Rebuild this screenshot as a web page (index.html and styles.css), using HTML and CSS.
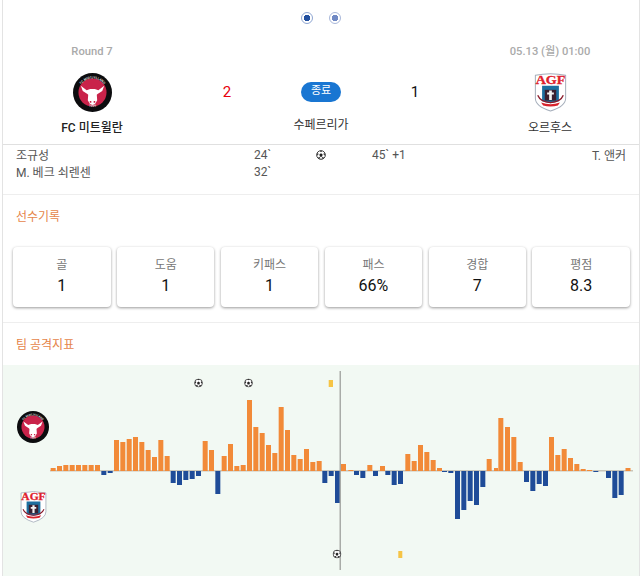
FILE: index.html
```html
<!DOCTYPE html>
<html lang="ko">
<head>
<meta charset="utf-8">
<title>FC 미트윌란 - 오르후스</title>
<link rel="stylesheet" href="styles.css">
</head>
<body>
<svg class="defs" width="0" height="0" aria-hidden="true">
  <defs>
    <path id="arc-top" d="M14 50a36 36 0 0 1 72 0"/>
    <path id="arc-bottom" d="M13 58a38 38 0 0 0 74 0"/>
    <symbol id="fcm" viewBox="0 0 100 100">
      <circle cx="50" cy="50" r="50" fill="#0c0c0e"/>
      <circle cx="50" cy="50" r="36" fill="#c9234a"/>
      <text class="ring-text"><textPath href="#arc-top" startOffset="50%" text-anchor="middle">FC MIDTJYLLAND</textPath></text>
      <text class="ring-text"><textPath href="#arc-bottom" startOffset="50%" text-anchor="middle">1999</textPath></text>
      <path fill="#fff" d="M20 33l15 11 9-3h12l9 3 15-11-5 13-12 8-2 2 1 14-5 9-7 3-7-3-5-9 1-14-2-2-12-8z"/>
      <path fill="#c9234a" d="M43 72h4v4h-4zM53 72h4v4h-4z"/>
    </symbol>
    <symbol id="agf" viewBox="0 0 100 116">
      <path fill="#fff" stroke="#a4adba" stroke-width="3" d="M5 7q45-10 90 0v68q0 24-45 38-45-14-45-38z"/>
      <text class="agf-text" x="50" y="34" text-anchor="middle" textLength="88" lengthAdjust="spacingAndGlyphs">AGF</text>
      <path fill="#1d6f9f" d="M25 38h50v46l-25 6-25-6z"/>
      <path fill="#3a2030" d="M33 50h34v32h-34z"/>
      <path fill="#f2f2f2" d="M46 52h8v6h6v6h-6v16h-8v-16h-6v-6h6z"/>
      <path fill="none" stroke="#8c1c2c" stroke-width="4" d="M12 66q8 20 38 22 30-2 38-22"/>
      <path fill="#d8222c" d="M22 88q28 10 56 0l-6 9q-22 6-44 0z"/>
    </symbol>
    <symbol id="ball" viewBox="0 0 24 24">
      <circle cx="12" cy="12" r="10.5" fill="#fff" stroke="#222" stroke-width="2"/>
      <path fill="#222" d="M12 8l4 3-1.500 5h-5L8 11zM9 2.500l3 2 3-2-3-1zM2.500 9l1 5 2.500-4-1-3zM21.500 9l-1 5-2.500-4 1-3zM7 21l4-1-3-3-3 1zM17 21l-4-1 3-3 3 1z"/>
    </symbol>
  </defs>
</svg>

<main class="page">
  <div class="pager">
    <span class="dot"></span>
    <span class="dot dot-muted"></span>
  </div>

  <section class="match">
    <div class="team">
      <div class="meta">Round 7</div>
      <svg class="crest"><use href="#fcm"/></svg>
      <div class="team-name team-name-bold">FC 미트윌란</div>
    </div>
    <div class="score score-win">2</div>
    <div class="status">
      <span class="pill">종료</span>
      <div class="league">수페르리가</div>
    </div>
    <div class="score">1</div>
    <div class="team">
      <div class="meta">05.13 (월) 01:00</div>
      <svg class="crest"><use href="#agf"/></svg>
      <div class="team-name">오르후스</div>
    </div>
  </section>

  <section class="goals">
    <span>조규성</span>
    <span>24`</span>
    <svg class="goal-ball"><use href="#ball"/></svg>
    <span class="away-minute">45` +1</span>
    <span class="away-scorer">T. 앤커</span>
    <span class="home-second">M. 베크 쇠렌센</span>
    <span>32`</span>
  </section>

  <section class="block">
    <h2 class="block-title">선수기록</h2>
    <div class="cards">
      <div class="card"><div class="card-label">골</div><div class="card-value">1</div></div>
      <div class="card"><div class="card-label">도움</div><div class="card-value">1</div></div>
      <div class="card"><div class="card-label">키패스</div><div class="card-value">1</div></div>
      <div class="card"><div class="card-label">패스</div><div class="card-value">66%</div></div>
      <div class="card"><div class="card-label">경합</div><div class="card-value">7</div></div>
      <div class="card"><div class="card-label">평점</div><div class="card-value">8.3</div></div>
    </div>
  </section>

  <section class="block-chart">
    <h2 class="block-title">팀 공격지표</h2>
    <svg class="chart" viewBox="3 365 636 211" width="636" height="211">
      <use href="#fcm" x="17" y="411" width="32" height="32"/>
      <use href="#agf" x="19.500" y="491" width="28" height="32"/>
      <rect class="axis" x="50" y="470" width="583" height="1.500"/>
      <g class="up">
        <rect x="50.67" y="468" width="5" height="3"/>
        <rect x="57" y="466" width="5" height="5"/>
        <rect x="63.33" y="465" width="5" height="6"/>
        <rect x="69.67" y="465" width="5" height="6"/>
        <rect x="76" y="465" width="5" height="6"/>
        <rect x="82.33" y="465" width="5" height="6"/>
        <rect x="88.67" y="465" width="5" height="6"/>
        <rect x="95" y="465" width="5" height="6"/>
        <rect x="114" y="440" width="5" height="31"/>
        <rect x="120.33" y="442" width="5" height="29"/>
        <rect x="126.67" y="439" width="5" height="32"/>
        <rect x="133" y="437" width="5" height="34"/>
        <rect x="139.33" y="442" width="5" height="29"/>
        <rect x="145.67" y="450" width="5" height="21"/>
        <rect x="152" y="457" width="5" height="14"/>
        <rect x="158.33" y="440" width="5" height="31"/>
        <rect x="164.67" y="456" width="5" height="15"/>
        <rect x="202.67" y="441" width="5" height="30"/>
        <rect x="209" y="450" width="5" height="21"/>
        <rect x="221.67" y="456" width="5" height="15"/>
        <rect x="228" y="444" width="5" height="27"/>
        <rect x="234.33" y="466" width="5" height="5"/>
        <rect x="240.67" y="465" width="5" height="6"/>
        <rect x="247" y="400" width="5" height="71"/>
        <rect x="253.33" y="427" width="5" height="44"/>
        <rect x="259.67" y="433" width="5" height="38"/>
        <rect x="266" y="445" width="5" height="26"/>
        <rect x="272.33" y="453" width="5" height="18"/>
        <rect x="278.67" y="407" width="5" height="64"/>
        <rect x="285" y="430" width="5" height="41"/>
        <rect x="291.33" y="455" width="5" height="16"/>
        <rect x="297.67" y="459" width="5" height="12"/>
        <rect x="304" y="449" width="5" height="22"/>
        <rect x="310.33" y="462" width="5" height="9"/>
        <rect x="316.67" y="461" width="5" height="10"/>
        <rect x="341" y="464" width="5" height="7"/>
        <rect x="348.33" y="470" width="5" height="1"/>
        <rect x="367.33" y="465" width="5" height="6"/>
        <rect x="380" y="466" width="5" height="5"/>
        <rect x="405.33" y="454" width="5" height="17"/>
        <rect x="411.67" y="461" width="5" height="10"/>
        <rect x="418" y="445" width="5" height="26"/>
        <rect x="424.33" y="452" width="5" height="19"/>
        <rect x="430.67" y="460" width="5" height="11"/>
        <rect x="437" y="468" width="5" height="3"/>
        <rect x="486.67" y="459" width="5" height="12"/>
        <rect x="494" y="468" width="4" height="3"/>
        <rect x="498.33" y="418" width="5" height="53"/>
        <rect x="505" y="427" width="5" height="44"/>
        <rect x="511.33" y="437" width="5" height="34"/>
        <rect x="517.67" y="462" width="5" height="9"/>
        <rect x="549" y="437" width="5" height="34"/>
        <rect x="555.33" y="455" width="5" height="16"/>
        <rect x="561.67" y="449" width="5" height="22"/>
        <rect x="568" y="458" width="5" height="13"/>
        <rect x="574.33" y="464" width="5" height="7"/>
        <rect x="580.67" y="469" width="5" height="2"/>
        <rect x="587" y="470" width="5" height="1"/>
        <rect x="625.5" y="468" width="5" height="3"/>
      </g>
      <g class="down">
        <rect x="101.33" y="471" width="5" height="4"/>
        <rect x="107.67" y="471" width="5" height="2"/>
        <rect x="170.67" y="471" width="5" height="12"/>
        <rect x="177" y="471" width="5" height="14"/>
        <rect x="183.33" y="471" width="5" height="9"/>
        <rect x="189.67" y="471" width="5" height="8"/>
        <rect x="196" y="471" width="5" height="5"/>
        <rect x="215.33" y="471" width="5" height="23"/>
        <rect x="322.33" y="471" width="5" height="12"/>
        <rect x="328.67" y="471" width="5" height="5"/>
        <rect x="335" y="471" width="5" height="32"/>
        <rect x="354" y="471" width="5" height="4"/>
        <rect x="360.33" y="471" width="5" height="7"/>
        <rect x="373" y="471" width="5" height="5"/>
        <rect x="385.33" y="471" width="5" height="4"/>
        <rect x="391.67" y="471" width="5" height="14"/>
        <rect x="398" y="471" width="5" height="13"/>
        <rect x="442" y="471" width="5" height="1"/>
        <rect x="448.33" y="471" width="5" height="2"/>
        <rect x="455" y="471" width="5" height="48"/>
        <rect x="461.33" y="471" width="5" height="39"/>
        <rect x="467.67" y="471" width="5" height="30"/>
        <rect x="474" y="471" width="5" height="34"/>
        <rect x="480.33" y="471" width="5" height="16"/>
        <rect x="524" y="471" width="5" height="11"/>
        <rect x="530.33" y="471" width="5" height="20"/>
        <rect x="536.67" y="471" width="5" height="13"/>
        <rect x="543" y="471" width="5" height="15"/>
        <rect x="593.33" y="471" width="5" height="1"/>
        <rect x="606" y="471" width="5" height="7"/>
        <rect x="612.33" y="471" width="5" height="27"/>
        <rect x="618.67" y="471" width="5" height="24"/>
      </g>
      <rect class="midline" x="339.500" y="371" width="1.500" height="199"/>
      <rect class="booking" x="328.700" y="380" width="4.300" height="7"/>
      <rect class="booking" x="398.300" y="551" width="4" height="7"/>
      <use href="#ball" x="194" y="378.500" width="9" height="9"/>
      <use href="#ball" x="244" y="378.500" width="9" height="9"/>
      <use href="#ball" x="332.500" y="549.500" width="9" height="9"/>
    </svg>
  </section>
</main>
</body>
</html>
```
FILE: styles.css
```css
* {
  box-sizing: border-box;
}

html,
body {
  margin: 0;
  height: 576px;
  overflow: hidden;
  background: #fff;
}

body {
  font-family: Roboto, "Noto Sans CJK KR", sans-serif;
  color: #222;
}

.defs {
  position: absolute;
}

.ring-text {
  font-family: Roboto, sans-serif;
  font-size: 8.500px;
  font-weight: 700;
  fill: #dcdcdc;
}

.agf-text {
  font-family: "Liberation Serif", serif;
  font-size: 36px;
  font-weight: 700;
  fill: #e0202c;
  stroke: #e0202c;
  stroke-width: 1;
}

.page {
  width: 638px;
  height: 576px;
  margin-left: 2px;
  border-left: 1px solid #e3e3e3;
  border-right: 1px solid #e3e3e3;
}

.pager {
  display: flex;
  justify-content: center;
  gap: 16px;
  height: 36px;
  padding-top: 12px;
}

.dot {
  width: 12px;
  height: 12px;
  border: 1.500px solid #8fa6d2;
  border-radius: 50%;
  background: radial-gradient(circle, #22509f 0 3px, #fff 3.500px);
}

.dot-muted {
  background: radial-gradient(circle, #7089c4 0 3px, #fff 3.500px);
  border-color: #a9b8da;
}

.match {
  display: grid;
  grid-template-columns: 178px 92px 96px 92px 178px;
  height: 109px;
  border-bottom: 1px solid #e0e0e0;
}

.team {
  display: flex;
  flex-direction: column;
  align-items: center;
  padding-top: 8px;
}

.meta {
  height: 16px;
  font-size: 11.200px;
  font-weight: 500;
  line-height: 16px;
  color: #aaa;
}

.crest {
  width: 39px;
  height: 39px;
  margin-top: 13px;
}

.team-name {
  margin-top: 8px;
  font-size: 12px;
  line-height: 16px;
  color: #333;
}

.team-name-bold {
  font-weight: 500;
  color: #222;
}

.score {
  padding-top: 46px;
  font-size: 15px;
  line-height: 20px;
  text-align: center;
  color: #111;
}

.score-win {
  color: #e8000b;
}

.status {
  display: flex;
  flex-direction: column;
  align-items: center;
  padding-top: 46px;
}

.pill {
  width: 40px;
  height: 20px;
  border-radius: 10px;
  background: #1976d2;
  font-size: 11px;
  line-height: 18px;
  text-align: center;
  color: #fff;
}

.league {
  margin-top: 15px;
  font-size: 12px;
  line-height: 16px;
  color: #333;
}

.goals {
  display: grid;
  grid-template-columns: 238px 55px 24px 39px auto 1fr;
  grid-auto-rows: 17px;
  align-items: center;
  height: 50px;
  padding: 1px 13px 0;
  border-bottom: 1px solid #eee;
  font-size: 12px;
  color: #555;
}

.goal-ball {
  justify-self: center;
  width: 10px;
  height: 10px;
}

.away-minute {
  grid-column: 5;
}

.away-scorer {
  text-align: right;
}

.home-second {
  grid-column: 1;
}

.block {
  height: 128px;
  border-bottom: 1px solid #eee;
}

.block-title {
  margin: 0;
  padding: 14px 13px 0;
  font-size: 12px;
  font-weight: 400;
  line-height: 16px;
  color: #e5854a;
}

.cards {
  display: grid;
  grid-template-columns: repeat(6, 1fr);
  gap: 6.300px;
  width: 617px;
  margin: 22px 0 0 10px;
}

.card {
  height: 60px;
  padding-top: 10px;
  border-radius: 4px;
  background: #fff;
  box-shadow: 0 1px 3px rgba(0, 0, 0, 0.4);
  text-align: center;
}

.card-label {
  font-size: 12px;
  line-height: 16px;
  color: #777;
}

.card-value {
  margin-top: 3px;
  font-size: 16px;
  font-weight: 400;
  line-height: 20px;
  color: #111;
}

.block-chart .block-title {
  height: 42px;
}

.chart {
  display: block;
  background: #f2f9f3;
}

.axis {
  fill: #c9c6ba;
}

.up {
  fill: #f28a38;
}

.down {
  fill: #1f4c98;
}

.midline {
  fill: #a9aca8;
}

.booking {
  fill: #f6c445;
}
```
